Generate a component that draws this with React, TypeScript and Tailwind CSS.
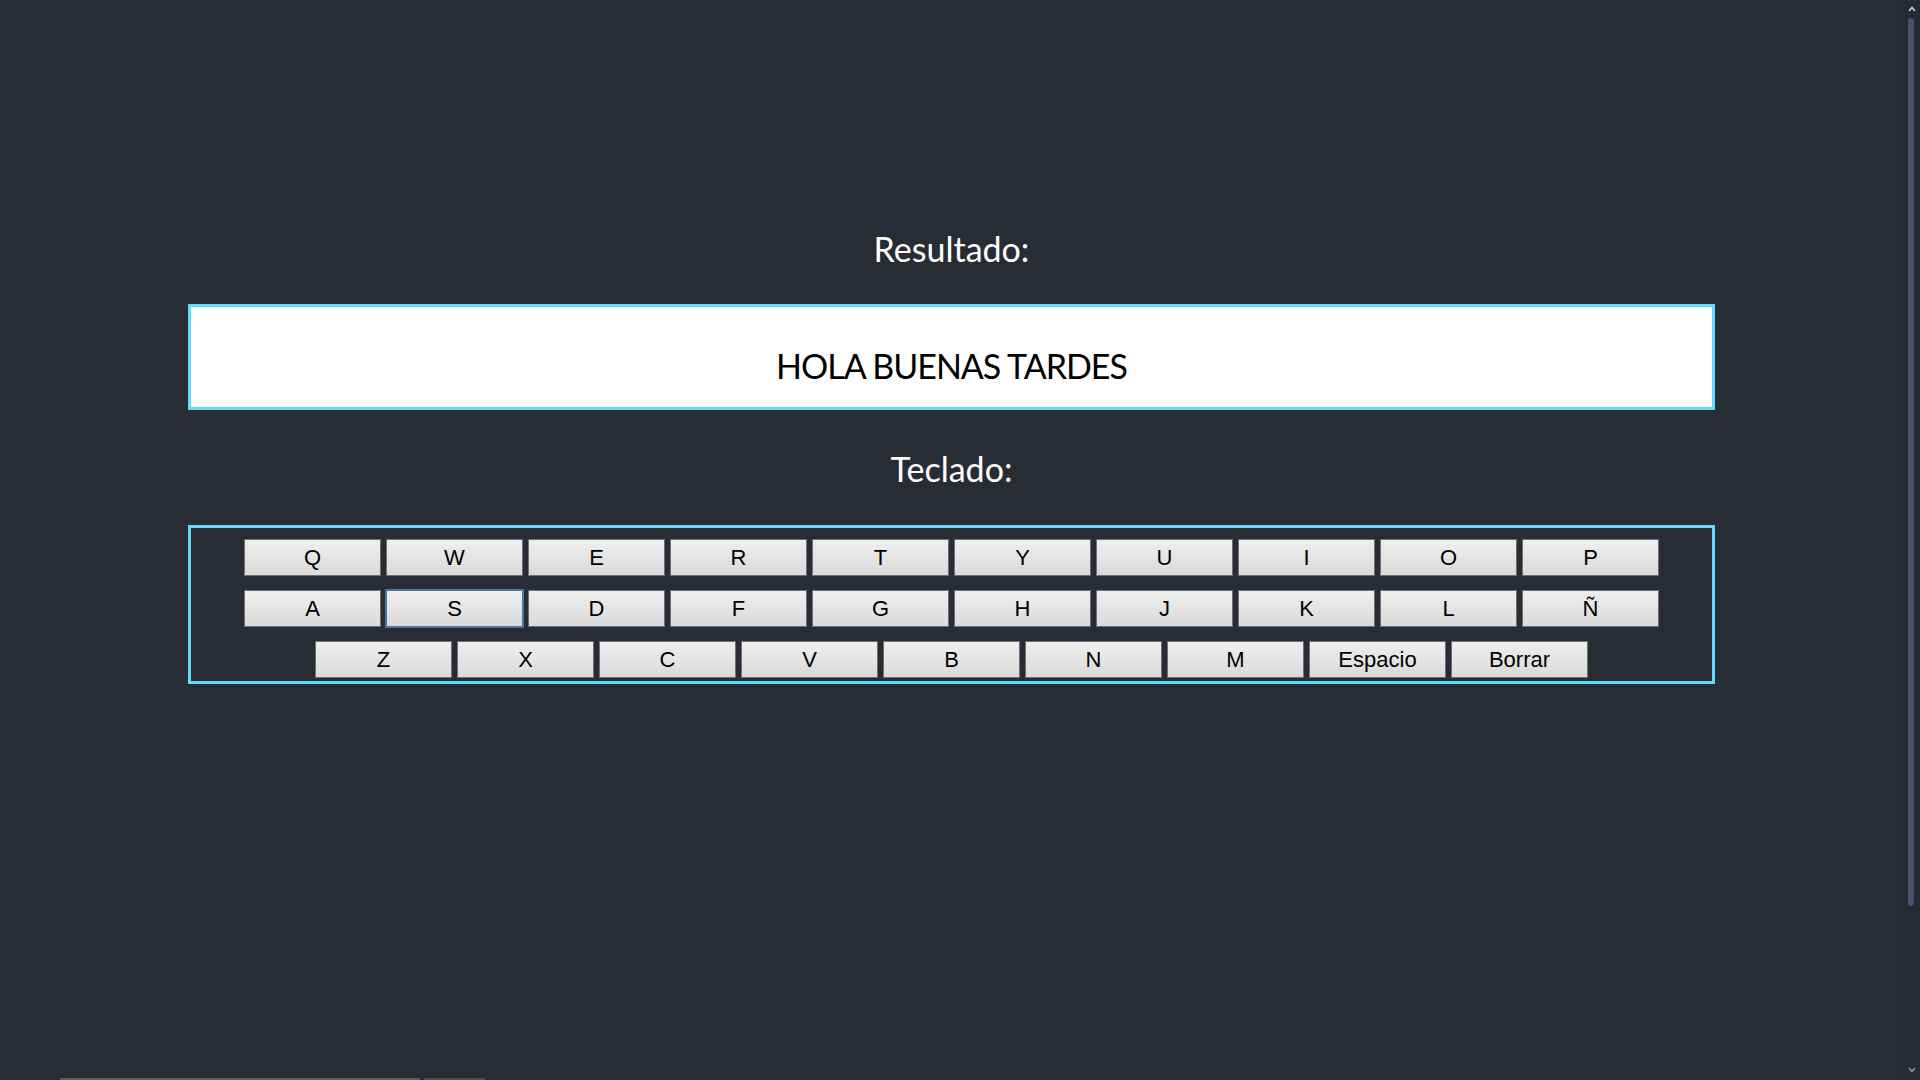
import React from "react";

const rows: string[][] = [
  ["Q", "W", "E", "R", "T", "Y", "U", "I", "O", "P"],
  ["A", "S", "D", "F", "G", "H", "J", "K", "L", "Ñ"],
  ["Z", "X", "C", "V", "B", "N", "M", "Espacio", "Borrar"],
];

function Key({ label, focused }: { label: string; focused?: boolean }) {
  return (
    <button
      type="button"
      className={
        focused
          ? "box-border h-[37px] w-[137px] border border-[#4a7a9a] outline outline-1 outline-[#4a7a9a] bg-linear-to-b from-[#efefef] to-[#dadada] text-[22px] leading-none text-black font-['Liberation_Sans',Arial,sans-serif] flex items-center justify-center"
          : "box-border h-[37px] w-[137px] border border-[#707070] bg-linear-to-b from-[#efefef] to-[#dadada] text-[22px] leading-none text-black font-['Liberation_Sans',Arial,sans-serif] flex items-center justify-center"
      }
    >
      {label}
    </button>
  );
}

export default function App() {
  return (
    <div className="flex h-screen w-full overflow-hidden bg-[#282c34]">
      <main className="flex h-full w-[1903px] flex-col items-center pt-[229px] font-['Lato','Open_Sans',sans-serif]">
        <h2 className="h-[40px] text-[34px] leading-[40px] text-white">Resultado:</h2>
        <div className="mt-[35px] box-border h-[106px] w-[1527px] border-[3px] border-[#61dafb] bg-white pt-[39px] text-center text-[34px] leading-[40px] tracking-[-1px] text-black">
          HOLA BUENAS TARDES
        </div>
        <h2 className="mt-[39px] h-[40px] text-[34px] leading-[40px] text-white">Teclado:</h2>
        <div className="mt-[36px] box-border flex w-[1527px] flex-col items-center gap-[14px] border-[3px] border-[#61dafb] pb-[3px] pt-[11px]">
          {rows.map((row, i) => (
            <div key={i} className="flex gap-[5px]">
              {row.map((k) => (
                <Key key={k} label={k} focused={k === "S"} />
              ))}
            </div>
          ))}
        </div>
        <div className="mt-auto flex h-[2px] w-full gap-[4px] pl-[60px]">
          <div className="h-[2px] w-[360px] bg-[#5c5e63]" />
          <div className="h-[2px] w-[61px] bg-[#4c4e54]" />
        </div>
      </main>
      <div className="flex h-full w-[17px] flex-col items-center bg-[#272a32] pt-[6px] pb-[7px]">
        <svg width="8" height="6" viewBox="0 0 8 6" className="ml-[5px] self-start">
          <path d="M1 5 L4 1.5 L7 5" fill="none" stroke="#d0d0d8" strokeWidth="1.6" />
        </svg>
        <div className="ml-[5px] mt-[6px] h-[888px] w-[6px] self-start rounded-full bg-[#4b4e6b]" />
        <div className="flex-1" />
        <svg width="8" height="6" viewBox="0 0 8 6" className="ml-[5px] self-start">
          <path d="M1 1 L4 4.5 L7 1" fill="none" stroke="#8e90a0" strokeWidth="1.6" />
        </svg>
      </div>
    </div>
  );
}
